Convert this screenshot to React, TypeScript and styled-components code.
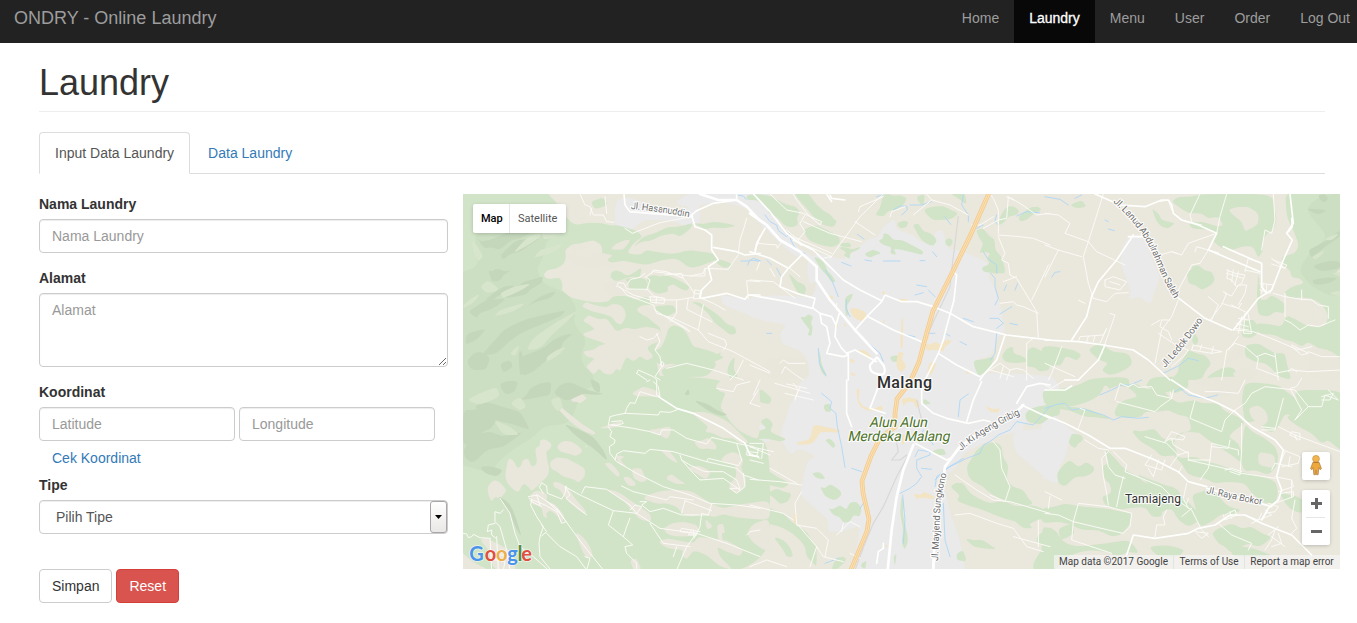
import React from 'react';
import styled, { createGlobalStyle, css } from 'styled-components';

const GlobalStyle = createGlobalStyle`
  *, *::before, *::after { box-sizing: border-box; }
  body {
    margin: 0;
    background: #fff;
    color: #333;
    font: 14px/20px "Liberation Sans", Arial, sans-serif;
  }
  html, body { overflow: hidden; }
`;

const Navbar = styled.nav`
  display: flex;
  justify-content: space-between;
  height: 43px;
  background: #222;
  overflow: hidden;
`;

const Brand = styled.a`
  padding: 8px 14px;
  font-size: 18px;
  color: #9d9d9d;
`;

const NavList = styled.div`
  display: flex;
  margin-right: -8px;
`;

const NavItem = styled.a<{ $active?: boolean }>`
  padding: 8px 15px;
  white-space: nowrap;
  color: ${(p) => (p.$active ? '#fff' : '#9d9d9d')};
  background: ${(p) => (p.$active ? '#080808' : 'transparent')};
  -webkit-text-stroke: ${(p) => (p.$active ? '0.3px #fff' : '0')};
`;

const Page = styled.main`
  padding: 20px 17px 0 39px;
`;

const PageHeader = styled.header`
  margin-right: 15px;
  height: 49px;
  border-bottom: 1px solid #eee;
`;

const Title = styled.h1`
  margin: 0;
  font-size: 36px;
  font-weight: 400;
  line-height: 40px;
`;

const Tabs = styled.div`
  display: flex;
  margin: 20px 15px 20px 0;
  height: 42px;
  border-bottom: 1px solid #ddd;
`;

const Tab = styled.a<{ $active?: boolean }>`
  height: 42px;
  margin-right: 2px;
  padding: 10px 15px;
  border: 1px solid transparent;
  border-radius: 4px 4px 0 0;
  color: #337ab7;
  ${(p) =>
    p.$active &&
    css`
      color: #555;
      background: #fff;
      border-color: #ddd #ddd #fff;
    `}
`;

const Columns = styled.div`
  display: flex;
  gap: 15px;
`;

const Form = styled.form`
  width: 409px;
`;

const Group = styled.div<{ $gap?: number }>`
  margin-bottom: ${(p) => p.$gap ?? 15}px;
`;

const Label = styled.label`
  display: block;
  margin-bottom: 5px;
  font-weight: 700;
`;

const control = css`
  display: block;
  width: 100%;
  height: 34px;
  padding: 6px 12px;
  border: 1px solid #ccc;
  border-radius: 4px;
  background: #fff;
  color: #555;
  font: inherit;
  box-shadow: inset 0 1px 1px rgba(0, 0, 0, 0.075);
  &::placeholder { color: #999; opacity: 1; }
`;

const Input = styled.input`${control}`;

const Textarea = styled.textarea`
  ${control}
  height: 74px;
  resize: vertical;
`;

const Pair = styled.div`
  display: grid;
  grid-template-columns: 196px 196px;
  gap: 4px;
`;

const LinkButton = styled.a`
  display: block;
  padding: 7px 13px;
  color: #337ab7;
`;

const Select = styled.div`
  ${control}
  display: flex;
  justify-content: space-between;
  padding: 0 0 0 16px;
  line-height: 32px;
`;

const SelectArrow = styled.span`
  display: flex;
  align-items: center;
  justify-content: center;
  width: 17px;
  height: 32px;
  border: 1px solid #a9a6a9;
  border-radius: 3px;
  background: linear-gradient(#fff, #f4f3f2 50%, #e9e8e7);
`;

const Buttons = styled.div`
  display: flex;
  gap: 4px;
`;

const Button = styled.button<{ $danger?: boolean }>`
  height: 34px;
  padding: 0 12px;
  border: 1px solid ${(p) => (p.$danger ? '#d43f3a' : '#ccc')};
  border-radius: 4px;
  background: ${(p) => (p.$danger ? '#d9534f' : '#fff')};
  color: ${(p) => (p.$danger ? '#fff' : '#333')};
  font: inherit;
`;

const MapFrame = styled.section`
  position: relative;
  width: 877px;
  height: 375px;
  overflow: hidden;
  font-family: Roboto, sans-serif;
`;

const MapCanvas = styled.svg`
  display: block;
`;

const card = css`
  position: absolute;
  background: #fff;
  border-radius: 2px;
  box-shadow: 0 1px 4px -1px rgba(0, 0, 0, 0.3);
`;

const MapTypes = styled.div`
  ${card}
  top: 10px;
  left: 10px;
  display: grid;
  grid-template-columns: 36px 57px;
  height: 29px;
  font-size: 11px;
  line-height: 29px;
`;

const MapType = styled.span<{ $active?: boolean }>`
  padding-left: 8px;
  color: ${(p) => (p.$active ? '#000' : '#565656')};
  font-weight: ${(p) => (p.$active ? 500 : 400)};
  & + & { border-left: 1px solid #e6e6e6; }
`;

const PegmanButton = styled.div`
  ${card}
  top: 258px;
  right: 10px;
  width: 28px;
  height: 28px;
`;

const ZoomButtons = styled.div`
  ${card}
  top: 296px;
  right: 10px;
  width: 28px;
  height: 55px;
`;

const Attribution = styled.div`
  position: absolute;
  right: 0;
  bottom: 0;
  display: flex;
  height: 14px;
  padding-right: 1px;
  background: rgba(245, 245, 245, 0.7);
  color: #444;
  font-size: 10px;
  line-height: 14px;
  white-space: nowrap;
`;

const Credit = styled.span<{ $width: number }>`
  width: ${(p) => p.$width}px;
  text-align: center;
  & + & { border-left: 1px solid rgba(225, 225, 225, 0.8); }
`;

/* Map geometry: six sheets drawn at three units per pixel. */
type Sheet = {
  x: number;
  y: number;
  green?: string[];
  urban?: string[];
  land?: string[];
  veil?: string[];
  shade?: string[];
  light?: string[];
  amber?: string[];
  water?: string[];
  rail?: string[];
  lane?: string[];
  road?: string[];
  main?: string[];
};

const northWest: Sheet = {
  x: -3, y: -4,
  green: [
    '-40,-30 240,-10 265,12 300,50 320,85 345,105 385,98 430,100 470,112 490,140 462,165 430,205 425,165 400,150 370,158 335,165 315,180 318,200 312,222 290,236 262,240 250,255 262,268 300,262 308,285 305,300 330,322 360,330 410,338 445,335 460,318 500,318 530,330 560,318 582,345 550,345 530,355 538,372 590,375 575,395 600,410 605,440 580,480 610,600 -40,600',
    '430,110 470,105 500,113 530,122 548,140 520,160 500,190 540,195 560,180 600,188 640,192 690,180 760,190 772,208 730,225 690,235 660,212 640,205 600,212 560,225 520,218 490,212 460,218 435,215 425,180',
    '520,170 535,155 550,140 590,128 620,112 660,110 700,98 690,118 660,140 640,130 600,138 575,152 545,155',
    '700,100 730,102 760,95 800,100 830,108 790,115 760,112 735,118 720,110',
    '560,262 580,255 600,260 620,255 660,272 690,290 680,303 660,296 640,282 622,290 625,305 590,312 565,295',
    '620,435 625,415 640,405 665,412 680,430 690,450 700,470 735,478 770,490 775,505 740,520 710,515 680,530 640,520 600,525 580,510 570,490 600,475 610,460',
    '693,335 720,338 745,355 775,375 800,402 825,410 830,430 810,435 790,418 765,400 745,370 720,350',
    '755,195 770,205 820,222 795,236 770,220', '392,35 430,22 445,45 405,58',
    '455,245 475,240 500,258 520,250 545,232 540,262 510,260 470,275 450,262',
    '500,265 540,262 560,270 565,298 535,300 500,295 490,275',
    '585,348 640,345 650,365 620,380 610,375 588,362', '660,455 720,480 800,500 750,520 690,500',
    '705,505 750,500 790,485 760,510 770,525 740,560 680,560 620,570 600,540 640,525', '810,515 825,500 820,540 835,560 815,570 800,545',
  ],
  urban: ['465,35 500,20 560,40 640,70 700,48 720,50 720,98 700,100 680,110 640,92 600,90 550,90 510,125 490,128 465,110', '640,40 690,8 930,-10 930,90 860,55 790,35 720,45 700,55', '780,315 850,325 930,330 930,400 880,380 840,365 790,345'],
  land: [
    '378,335 400,345 440,352 460,340 488,348 500,375 485,405 468,398 455,380 430,372 410,368 390,362 365,350', '368,392 385,375 415,388 440,385 455,405 470,425 500,412 520,418 560,410 600,418 608,440 600,455 575,462 560,475 582,500 560,512 540,498 520,515 500,500 490,520 480,545 470,535 455,555 430,550 418,535 400,555 378,530 390,518 405,505 380,500 368,485 400,480 420,465 440,462 405,450 375,440 368,430 405,418 390,405',
    '538,350 555,345 570,355 585,362 590,375 600,385 620,395 590,405 560,380 545,375', '325,170 345,160 372,164 385,172 360,184 335,182', '318,195 340,192 370,200 385,205 410,185 430,190 460,195 440,210 465,225 490,215 470,235 430,228 400,235 350,230',
    '430,275 460,282 500,265 510,300 480,318 445,315', '450,178 470,160 495,150 512,150 490,180', '480,452 520,455 560,465 530,475 490,470',
  ],
  veil: ['40,130 110,135 200,115 330,112 260,150 250,200 230,240 250,280 320,310 350,350 340,400 380,450 360,500 390,560 400,600 -40,600 -40,260 60,230'],
  shade: [
    '45,130 60,155 90,150 140,128 200,118 250,115 210,130 180,145 150,152 120,180 95,172 70,175', '85,240 95,245 110,235 135,245 155,240 130,255 120,272 95,275', '75,330 100,310 130,290 165,285 150,300 120,315 90,335', '25,365 50,348 80,330 140,325 115,345 90,360 60,368 50,385',
    '190,275 220,268 250,258 245,280 215,295 200,312 170,320 130,325', '110,445 130,420 190,390 250,375 320,360 300,380 240,405 180,430 140,462 110,490 80,495 60,500', '20,515 40,490 60,485 80,495 90,505 80,535 65,540 35,540', '185,500 210,490 250,475 280,450 310,435 340,430 310,455 300,480 260,510 220,545 185,560',
    '170,150 200,148 240,145 210,165 180,185 150,192 130,210 120,195', '20,430 80,415 50,450 15,465', '240,320 270,308 290,305 270,325 230,335 200,350', '175,490 185,480 195,540 180,560', '120,520 150,510 160,530 130,550',
  ],
  light: [
    '180,165 205,140 240,128 245,138 205,165 160,190', '120,310 160,290 215,280 185,300 130,325', '200,480 215,450 240,430 280,402 310,385 355,360 320,395 270,440 250,465 230,478', '10,345 35,325 60,310 45,335 10,355', '35,150 50,165 70,200 55,215 40,185', '240,180 280,170 310,160 285,185 220,205', '120,360 160,348 200,338 160,365 100,380', '150,490 165,475 180,465 165,500', '240,105 320,110 290,140 250,150', '260,500 290,480 320,470 290,500 260,515', '60,290 85,270 120,300 80,310',
  ],
  water: ['830,15 850,18 858,28', '843,213 868,213 880,205 900,212', '868,213 863,225'],
  lane: [
    '360,12 375,45 390,50 400,75 430,75 440,95 462,97', '390,75 395,55', '435,20 440,70', '495,115 517,130 600,98 695,80', '860,85 850,120 840,150 835,190', '890,240 900,215',
    '470,290 475,278 492,280 500,297 562,298 580,318 610,325', '475,290 520,315 570,330 650,330 700,322', '500,285 512,268 540,262 555,250', '560,300 570,270 560,262', '555,262 580,245 640,252 690,258 730,250 735,235 805,238 820,215 835,195', '575,250 580,240 620,245 670,265 665,250 615,255', '735,235 735,258 690,258', '670,265 690,290 703,310',
    '480,290 500,315 580,345 590,370 640,385 715,420 745,455 820,485 930,545', '585,360 640,395 690,425 680,415 620,380', '705,300 722,302 718,325 700,327 705,300', '703,310 720,312', '570,320 615,325 612,340 572,337 570,320', '590,322 588,340',
    '650,330 650,370 630,395', '590,430 600,455 585,480 600,500 605,530 585,560 600,570', '605,515 612,520 608,530 600,525 605,515', '540,440 560,450 580,445 595,430', '530,550 535,540 580,560 590,570', '620,535 680,520 760,540 850,570',
    '685,325 680,358 755,395', '725,325 760,340 795,360', '730,345 725,370 715,420', '850,510 830,550 810,570', '745,430 795,450 800,465 790,480', '865,325 860,272 900,275', '530,550 560,570',
  ],
  road: ['492,12 495,45 510,65 570,70 695,80', '695,75 705,110 735,120 755,135 755,180 775,210 745,230 755,270 725,300 720,325', '760,172 830,185 855,195 900,190', '695,75 710,62 760,40 830,30 830,12', '885,180 900,140', '725,325 800,310 855,328 865,315 900,315'],
  main: ['720,12 775,30 830,30 860,50 900,92'],
};

const southWest: Sheet = {
  x: -3, y: 186,
  green: ['-40,-25 770,-10 800,30 780,80 800,110 860,165 930,190 930,600 -40,600'],
  land: [
    '765,20 780,5 785,-5 900,-10 900,180 860,165 835,150 810,125 795,100 780,80 790,60 830,45 800,40 780,35', '515,40 535,28 550,20 580,28 600,40 595,52 565,48 530,50', '333,50 350,45 355,30 370,45 382,55 360,70 350,65 335,65', '292,85 305,82 320,95 345,115 370,135 408,158 400,165 375,155 350,140 325,120', '415,145 445,135 485,122 480,138 450,145', '565,150 600,145 633,138 630,165 620,178 600,165 585,160',
    '690,95 740,97 780,112 810,130 840,160 868,188 840,190 820,175 790,175 760,160 735,155 745,140 720,120', '290,200 305,185 325,182 345,190 368,210 360,222 345,228 330,222 300,215', '270,245 290,232 320,235 345,248 375,265 375,290 355,308 345,300 310,290 290,275 272,265',
    '145,235 160,240 172,265 182,260 190,238 205,235 215,262 232,250 225,205 240,198 240,180 255,178 275,190 272,205 258,215 262,240 268,270 262,290 240,310 215,335 205,320 190,310 175,338 155,325 140,305 135,285', '82,320 100,300 118,305 140,330 130,345 120,355 105,350 95,365 85,345', '280,305 300,308 325,325 345,355 380,395 375,402 355,390 320,360 300,330 280,320', '210,345 230,330 262,342 260,365 285,372 315,410 305,430 295,410 270,390 258,400 262,415 250,410 245,380 215,372',
    '432,250 450,248 465,262 480,282 475,292 455,275', '515,265 545,265 552,285 562,300 545,308 520,295', '488,292 505,290 525,305 528,318 505,318', '620,290 635,282 655,298 678,312 650,312 622,300', '700,185 725,182 745,172 770,195 768,210 745,205 720,208', '680,262 720,257 745,270 752,280 738,298 715,285', '780,240 800,222 820,215 840,225 850,240 845,262 810,252',
    '600,210 625,210 650,240 652,250 630,238', '545,355 590,335 650,328 700,335 750,370 790,385 830,375 930,360 930,420 860,415 830,412 790,402 760,412 730,400 700,410 670,405 650,380 620,370 590,372', '440,330 460,330 490,345 530,375 570,400 575,425 540,420 510,385 490,360', '610,445 635,430 670,425 710,435 718,450 700,468 650,470 620,462', '595,485 620,475 650,480 700,490 715,470 745,475 800,480 850,510 840,530 800,515 770,500 780,530 820,570 780,560 740,525 700,510 680,540 665,525 670,510 620,505',
    '860,460 880,430 930,415 930,520 880,490', '770,435 790,430 795,460 785,458 790,495 775,480', '830,380 850,370 870,385 840,400', '345,455 370,470 390,500 400,530 380,535 365,510', '465,225 495,230 480,240 500,260 480,255', '60,480 75,472 110,490 150,510 160,545 170,570 100,570 90,515', '825,250 840,240 845,270 860,300 850,330 825,340 805,315 830,290', '510,540 530,535 545,570 520,570', '735,415 760,440 740,450',
  ],
  urban: ['862,160 890,130 930,140 930,190 880,175'],
  veil: ['-40,-40 380,-40 400,-15 400,10 360,50 330,130 250,140 210,180 170,200 120,240 90,280 -40,240'],
  shade: [
    '9,90 40,90 60,85 90,98 110,115 95,145 70,155 40,180 9,200', '120,10 150,2 175,5 165,35 140,45 125,30', '180,60 200,45 210,25 240,10 275,5 270,45 245,50 220,55', '40,80 80,65 120,78 180,95 195,120 210,150 180,140 150,130 110,122 90,110', '10,210 30,180 60,160 90,155 130,170 190,155 160,180 130,200 80,210 40,250 15,235', '60,260 90,258 130,270 110,290 75,280', '280,40 300,15 330,5 380,30 435,42 400,45 370,40 320,65', '310,130 360,150 400,170 430,210 445,245 400,205 350,170', '110,345 150,370 170,420 185,470 170,450 150,400', '700,60 740,70 770,90 805,105 780,108 740,90', '672,45 685,25 690,45', '390,-5 420,10 420,40 400,30',
  ],
  light: ['150,70 180,50 200,80 180,92', '20,60 60,40 110,20 120,50 60,75', '270,60 300,50 310,85 290,95', '100,120 150,140 180,165 130,165'],
  lane: [
    '590,0 590,45 600,50 595,20 580,5', '590,50 540,35 525,70 510,68 500,85 495,100 470,105 450,110 445,135 475,135 490,130 485,122 455,125', '495,100 540,102 595,105 600,95 630,97 650,90', '445,140 455,155 450,170 465,180 463,190 448,200 450,220 470,245 530,280 610,320 690,345 750,370 830,375 900,385', '455,135 520,145 570,155 600,165 605,150 640,150 680,175 740,192 755,172 830,190 880,200', '465,240 470,222 490,212 555,220 570,208 640,215 740,245 830,265 850,285 895,300',
    '740,245 745,235 835,257 845,240 830,190', '660,225 665,240 690,255 735,275 790,275 830,300 840,325 810,325', '665,240 700,280 720,300 790,295 840,330', '850,280 855,320 830,340 810,325', '570,0 560,5', '770,25 820,35 830,15 870,5', '895,30 870,70 900,80',
    '485,318 520,335 560,345 620,360 630,350 700,360', '365,340 375,320 440,328 510,375 530,400', '315,320 360,345 460,392 530,400 600,445 710,460 800,490 900,530', '530,400 545,380 525,375 510,390', '540,365 560,365 545,375 570,395 610,385 665,405 745,405 755,372', '675,362 665,400', '675,362 755,392', '460,392 445,435 490,470 518,495 495,500 500,520 530,550 530,570', '490,470 500,440 510,415',
    '318,318 315,340 305,357 262,340 260,318 245,308 238,322 250,340', '315,320 330,345 318,355 380,405', '205,350 232,345 285,380 300,400 262,365', '207,355 255,375 290,395 305,430 318,425 290,385', '290,385 340,455 370,495 430,570', '215,360 212,375 230,410 250,440 240,470 237,490 240,530 270,567', '245,435 260,455 245,468', '260,460 300,500 350,530 380,570', '230,345 240,375', '210,362 245,380',
    '120,355 150,400 165,460 180,500 220,530 265,570', '130,390 120,400 105,395 105,425 120,440 140,510 150,570', '105,430 85,435 82,455 95,450 95,465 108,475', '9,460 20,462 25,473 35,470 40,463 60,473 90,475', '90,475 95,570', '90,525 135,525', '95,540 130,540', '110,470 115,570',
    '710,460 660,455 665,445 720,455', '705,470 720,440 725,400 745,405', '710,460 680,500 650,570', '710,465 685,465 695,450', '570,430 610,490 650,495 690,500', '860,465 870,455 900,450', '870,200 895,205 890,230 860,225 862,205', '865,215 895,218', '378,200 378,200', '375,530 390,535 380,570', '100,535 135,545 130,570 100,570', '700,450 702,475', '650,500 640,530',
  ],
  road: ['595,50 650,85 700,100 790,145 855,190', '855,190 870,225 895,230'],
};

const north: Sheet = {
  x: 287, y: -4,
  green: [
    '-10,15 30,12 60,18 85,30 110,45 135,48 150,65 140,85 145,105 125,112 105,108 80,80 55,70 50,50 20,30 -10,30', '130,10 160,12 175,10 200,45 225,65 242,75 258,95 250,112 220,105 195,85 170,55', '160,122 175,112 200,105 235,122 268,140 270,158 250,172 210,165 175,150', '400,12 440,14 470,22 465,40 440,60 415,62 400,80 375,75 390,55', '500,20 525,12 520,50 505,35', '520,60 545,50 580,48 600,58 625,70 605,88 570,90 545,90', '440,100 460,92 475,95 470,112 450,115',
    '488,105 505,100 520,125 540,128 562,150 550,168 530,162 510,145 500,125', '385,152 400,145 400,130 415,132 430,150 455,150 480,162 522,185 515,195 480,185 430,175 440,195 420,190 425,172 400,165', '585,150 600,143 610,155 600,170 588,165', '265,172 290,172 305,178 335,170 320,182 300,188 300,208 280,195 290,188', '345,190 370,178 395,190 375,195 362,203 348,198', '190,200 208,205 225,222 232,242 245,255 258,275 245,278 230,255 215,240',
    '678,120 700,115 715,135 735,150 735,180 755,200 768,250 735,250 700,245 695,232 720,222 710,205 722,190 700,185 688,190 700,160 688,145', '770,50 790,48 808,62 800,75 775,80 760,100 745,105 750,80', '805,80 840,52 865,50 875,60 850,72 830,90 810,95', '115,250 130,262 142,275 165,285 170,305 160,318 145,310 130,285', '285,325 295,315 310,310 300,335 290,345 297,375 287,378 285,350', '150,380 165,382 175,372 190,380 182,400 188,410 185,438 172,435 180,420 165,402',
    '420,500 445,495 445,515 425,515', '670,512 700,508 735,498 722,530 700,550 685,558 675,535', '755,500 770,475 790,470 790,490 820,500 835,515 795,520 765,515', '205,475 212,500 215,525 232,558 220,555 208,530', '100,520 120,522 150,530 175,545 165,550 135,535', '600,10 645,10 650,45 625,25', '265,160 300,158 305,172 275,170', '832,480 850,470 870,482 900,490 900,540 870,545 850,530 828,530', '240,85 262,92 250,112',
  ],
  urban: [
    '-10,10 30,10 110,130 170,205 130,195 80,150 0,70', '170,240 175,210 200,190 245,200 280,210 330,170 350,150 385,140 400,110 432,85 440,120 480,130 520,160 550,160 555,125 580,120 590,175 640,185 720,220 715,260 728,280 745,330 755,360 760,400 765,430 742,440 735,470 720,500 670,510 700,560 720,600 180,600 175,510 150,480 95,462 90,430 110,405 60,395 -10,378 -10,325 60,315 150,320 190,325', '120,185 150,175 190,200 190,215 150,190',
  ],
  land: ['180,280 200,275 190,320 160,315', '30,520 90,500 165,500 180,560 100,570 40,560', '390,-5 500,-5 470,10 430,20'],
  amber: [
    '300,355 320,355 345,365 350,380 335,395 305,380', '455,385 460,385 458,475 450,475', '445,485 462,488 455,505 470,530 455,548 440,535 440,510', '525,460 540,465 555,455 572,465 585,450 605,450 600,460 585,470 580,485 560,480 545,480 530,482', '540,515 560,520 545,555 530,550', '325,480 345,480 365,500 355,507 330,490', '255,400 265,405 260,420', '280,398 290,405 285,412', '236,315 252,320 245,330', '450,325 475,328 465,340 450,335', '395,303 410,308 400,315', '300,505 315,512 310,520 300,515', '300,545 320,555 305,558', '645,540 662,550 650,553', '398,390 405,390 400,405', '525,430 540,440 528,455',
  ],
  water: [
    '45,75 60,95 80,105 85,122 110,140 120,130', '120,145 130,165 145,185 165,190', '225,240 245,270 255,295 265,320', '290,330 288,355 300,380', '320,430 350,455 390,490 400,515', '322,133 342,147', '380,20 400,15', '430,60 450,48 470,48 472,60 455,75', '480,45 515,45 545,35', '640,15 635,45 655,75 655,95', '585,80 592,90 602,103', '740,75 735,95 745,105', '700,185 712,205 740,225 740,250', '700,105 680,115', '800,78 830,65 868,68', '722,250 735,265 735,290 745,325 735,345', '762,302 770,285', '795,300 803,280', '720,385 745,385 760,400 740,415', '780,400 803,405', '750,372 785,350', '740,430 735,490 722,510', '345,210 365,213', '400,213 450,213', '510,212 525,212', '500,285 530,290', '495,315 520,308', '548,185 560,200', '205,475 208,520 228,558', '585,430 600,438', '470,435 495,440', '528,430 555,430', '0,210 32,214', '50,210 65,225', '80,235 95,262', '50,430 65,430', '630,455 650,465', '275,217 303,228', '535,300 555,320', '640,385 670,395',
  ],
  rail: ['625,80 605,240 600,290 550,395 530,440'],
  lane: [
    '60,12 110,60 160,70 215,95 210,105 175,75 140,30 130,12', '165,75 150,100 165,125 145,150', '160,95 240,130 335,155', '240,205 330,80 400,12', '315,95 375,135', '130,140 245,190', '110,120 155,160 245,200', '20,160 80,165 82,175 95,155', '325,65 330,50 400,20', '420,80 425,65 465,50', '490,75 520,50 545,30 530,12', '545,30 600,45 655,75', '700,115 745,90 745,60 730,25 720,12', '665,105 690,105 730,80', '745,140 765,190 755,210 775,220 780,255 800,265 860,365 865,445', '800,260 760,275', '745,135 810,140 850,145 900,165', '745,130 745,90 770,85 775,20 810,40 860,75 900,70', '895,225 860,300 845,330', '750,340 790,335 800,345 820,350 865,370', '0,270 70,275 135,325', '120,235 150,260', '90,520 100,510 115,520 165,520', '95,550 105,530 130,550 160,570', '0,525 60,550', '690,560 750,520 780,540 800,535 820,540 850,565', '830,570 830,460 850,445', '760,530 750,565', '780,540 770,570', '720,540 790,560', '260,340 260,360', '240,200 220,205', '770,20 790,30', '60,235 75,260',
  ],
  road: [
    '15,190 20,160 45,115', '0,185 60,205 115,235 155,195', '115,235 95,260 90,290 140,310 195,325 188,355 110,335 0,315', '190,355 210,370 245,380 258,405 255,440 275,475 295,495 280,500 230,490 240,460 230,410 215,400 210,370', '268,370 258,405', '295,490 295,570', '290,490 315,480 380,515', '315,420 355,375 395,335 405,315 455,335 500,335 550,350 600,370 670,410 770,435 900,450', '355,380 430,420 515,455', '395,332 330,300 280,270 230,220 190,180 130,150', '610,245 620,255 612,330 590,410 580,450 565,490 525,570', '565,490 620,525 690,560', '765,435 740,510 700,555 690,570', '240,15 245,25 285,30', '230,12 245,35', '10,12 60,65 110,130 155,165',
  ],
  main: ['0,70 50,105 90,150 150,185 200,230 200,270 240,330 315,420 380,490'],
};

const south: Sheet = {
  x: 287, y: 186,
  green: [
    '-10,45 20,35 35,28 50,40 65,55 60,72 40,70 20,60 -10,62', '30,125 50,112 70,130 60,155 80,165 110,178 90,185 50,175 -10,180 -10,160 30,152 50,145', '220,75 240,70 245,95 225,95', '185,280 210,275 228,298 200,295', '210,320 225,325 240,312 270,330 275,345 255,362 225,350', '235,385 250,388 270,375 290,390 298,368 320,365 335,385 330,410 310,405 300,425 280,428 270,412 250,405', '520,55 545,70 520,75', '545,215 560,208 580,205 590,225 560,225',
    '650,260 665,235 680,210 700,195 735,185 755,198 758,230 775,255 770,300 788,320 820,330 835,355 850,370 830,378 790,372 750,355 720,340 700,320 670,305 655,290', '600,320 620,308 640,310 660,340 690,358 720,370 760,362 800,380 850,375 900,395 900,430 880,415 850,425 830,440 800,425 750,412 700,390 650,375 620,362 630,345', '645,475 670,480 700,480 720,495 740,508 700,505 670,500', '825,100 845,85 870,78 930,70 930,105 900,112 870,135 830,125', '860,470 880,455 900,440 930,465 900,500 860,490', '850,550 870,515 900,490 930,500 930,570 850,570', '455,345 462,370 458,400 465,430 475,480 465,510 455,490 460,450 450,400', '-10,275 20,270 60,275 85,292 120,310 100,325 70,318 40,310 -10,300', '50,340 80,325 100,335 125,340 115,365 90,372 70,352', '-10,350 20,358 60,385 100,400 130,430 170,455 185,480 200,500 200,560 185,545 170,530 165,500 150,480 120,455 90,440 50,430 20,405 -10,385',
    '225,180 240,175 258,195 250,205 235,190', '620,520 640,510 650,545 620,540', '250,550 265,532 280,530 290,540 260,570 245,570', '70,470 100,480 120,500 130,530 110,530 100,510', '790,420 820,415 850,445 820,445', '430,530 440,520 435,560', '330,555 350,540 345,570',
  ],
  urban: [
    '110,110 120,70 150,45 145,10 190,-20 900,-20 930,20 930,80 880,105 820,130 820,155 780,160 740,170 690,195 640,220 620,260 590,285 580,300 590,350 600,400 615,440 630,480 650,600 300,600 315,520 325,480 330,440 300,445 280,455 250,455 235,455 235,420 190,380 150,345 160,290 175,240 200,230 150,205 120,225 100,190 90,160', '790,155 880,145 930,160 930,310 900,305 860,270 830,245 800,220 790,190',
  ],
  amber: ['318,28 330,25 325,60 340,80 370,88 395,75 400,92 350,92 325,75', '190,132 230,142 270,150 268,158 210,155 200,175 185,192 140,195 145,185 180,180', '460,80 455,55 480,52 505,60 510,80 498,85 490,65 470,65', '490,340 515,345 520,335 555,350 550,358 515,352 500,358', '702,75 725,88 750,85 745,98 720,95', '405,495 418,498 408,503', '455,160 465,165 465,190 455,195', '130,400 142,405 140,435 132,430'],
  water: ['215,40 245,65 240,85 258,100 262,140 275,200 285,262', '305,265 335,275', '555,320 560,290 600,260 650,235 690,220 700,195 720,185 745,165 780,150 800,125 850,135 900,80', '555,300 590,265 640,235', '495,230 505,210 540,215 540,225 500,240 500,265 515,290 500,310 480,325 450,340', '458,345 465,420 460,490', '580,370 585,480 600,530', '540,180 550,195', '510,175 520,150', '625,110 630,60 655,42', '515,265 545,268', '330,385 340,370', '225,550 265,535'],
  rail: ['500,60 515,120', '440,190 445,215 425,240 450,240 470,225', '475,225 440,290 400,380 370,430 345,490 315,570'],
  lane: ['10,45 30,0', '75,10 180,40', '105,40 190,60', '130,10 145,30 135,55', '150,20 135,60', '110,12 170,25', '0,200 60,225', '0,190 40,190 35,235', '25,205 70,215', '0,240 40,250', '0,220 30,235', '60,265 140,310', '0,298 90,305 155,315', '155,335 135,370 140,430 200,500 220,530 280,545', '0,375 100,400 130,420', '140,435 200,445 235,480 225,530', '260,465 300,425 330,440', '730,185 750,210 755,265 780,320 765,365 720,345', '615,285 680,330 730,360 780,365 900,400', '615,405 660,400 740,430 790,445 830,500 880,515', '865,420 865,500', '790,470 900,500', '280,430 275,455', '300,520 330,535', '0,560 50,540 110,560', '200,500 180,560'],
  road: ['290,0 290,50 290,100 305,140', '385,20 360,85 405,100', '515,10 515,70 550,100 590,115 655,130 700,120 720,125', '695,5 670,60 650,125', '495,190 590,240 600,235', '800,70 830,20 870,10 900,15', '815,75 900,115', '550,570 550,540', '380,550 385,515 400,505 400,490'],
  main: ['490,195 460,270 440,350 425,450 413,570', '580,300 585,260 630,200 700,150 760,120 800,95 820,75', '575,300 565,370 555,450 550,570'],
};

const northEast: Sheet = {
  x: 582, y: -4,
  green: [
    '-10,470 20,468 60,475 90,482 110,495 95,512 75,502 60,500 50,525 10,530 -10,520', '130,480 150,465 175,465 200,485 250,490 262,515 255,530 220,550 190,555 170,540 190,520 160,508', '320,55 340,70 350,90 370,95 390,100 370,115 350,110 335,95', '380,35 400,20 440,20 470,12 680,12 690,60 695,90 685,120 665,130 650,160 655,180 640,205 625,170 600,168 560,180 530,175 500,150 515,140 500,120 470,118 440,115 430,100 470,95 520,110 535,105 520,80 490,85 470,70 430,70 400,50', '720,0 930,0 930,600 880,560 900,510 860,500 820,475 790,455 770,470 745,455 720,450 690,435 640,430 630,400 670,402 710,410 725,375 755,390 790,410 840,410 850,380 835,345 800,325 770,322 740,325 715,310 740,290 778,280 765,265 740,262 735,240 712,225 710,200 750,190 762,165 745,120 725,80',
    '425,245 440,240 440,230 460,225 480,242 500,245 510,268 500,285 470,300 450,285 430,280', '640,250 645,280 645,330 665,330 680,315 720,340 718,370 690,365 670,380 640,375 635,330', '400,530 415,505 430,480 455,490 480,495 500,520 480,545 470,570 380,570 400,545', '600,465 640,460 665,475 690,490 720,490 725,520 740,570 700,560 680,535 660,520 630,515 600,500', '590,400 605,390 630,390 640,430 615,445 590,440', '75,45 110,30 125,50 95,55', '440,450 450,430 462,450 450,470', '500,550 530,535 560,530 600,570 480,570',
  ],
  land: ['550,60 570,52 610,50 640,70 640,100 625,112 600,125 590,95 570,80', '545,500 570,480 590,465 600,490 570,510 540,520', '560,550 600,530 640,550 620,570 580,570', '870,250 885,235 885,262', '800,470 850,480 885,500 885,570 800,570 790,520'],
  urban: ['250,140 275,132 300,140 308,160 315,195 325,215 345,260 335,290 325,310 320,340 300,335 285,320 250,328 258,305 245,270 225,220 235,165'],
  veil: ['780,60 820,20 930,0 930,310 860,320 800,290 760,240 800,180 850,140'],
  shade: ['790,180 820,165 850,150 885,120 885,140 840,170 800,205', '820,15 840,12 850,25 840,38 825,30', '800,228 850,212 885,215 885,235 830,245', '780,55 850,60 820,75', '800,270 850,262 880,265 850,280 810,285'],
  light: ['800,200 840,180 830,195 810,210', '850,310 885,300 885,320', '860,250 885,245 885,260', '835,148 885,128 860,152'],
  water: ['0,20 45,28 70,45', '180,90 190,95', '190,117 208,122', '20,262 30,247 45,245', '355,550 375,540 400,528 430,505 460,512', '90,25 110,15'],
  lane: [
    '175,12 160,60 130,155 115,200 130,280 145,325', '130,155 60,130 75,100 40,75 0,70', '0,165 40,180 110,200', '130,155 155,185 240,225', '0,260 40,180', '145,325 185,335 210,310 250,308', '180,270 205,260 245,275 225,300 180,290 180,270', '195,275 225,285', '440,95 435,75 465,12', '515,130 525,80 545,12', '410,90 470,105', '380,185 410,195 430,160 515,130', '345,195 380,185 395,190', '400,300 440,225 465,220 490,180', '490,180 455,170 450,185', '400,330 380,380 350,420 330,520', '375,390 350,390 345,410 370,425 380,450', '345,390 320,405', '490,320 520,345 500,390', '495,390 530,345 545,310 535,305', '530,340 580,355 590,340', '540,310 560,318 580,285 605,285 600,310 580,345', '560,345 610,370', '545,240 570,250 600,255 590,280 575,290 560,270 545,265 550,240', '545,250 595,265', '565,240 560,275', '580,245 570,285', '645,280 685,285 675,310 645,300', '655,280 650,310', '665,285 665,310', '680,205 720,235 725,225 685,210', '680,222 720,235', '600,245 610,205 620,210', '720,310 720,380', '720,390 740,400 765,420 790,405 820,410 870,390', '685,310 720,320 770,328 800,330 820,345 850,350 850,385', '770,300 770,330', '570,420 625,425 690,450 760,480 800,470', '600,370 595,430 620,430 610,375', '580,385 610,390', '575,400 610,410', '570,415 610,420', '590,380 580,430', '640,505 600,470 570,460 545,480 530,570', '640,505 635,535 700,560', '635,500 660,490 690,500', '690,490 700,570', '690,550 740,540 790,545 885,540', '740,465 790,490 770,495 740,470', '790,485 830,500 885,500', '580,440 550,480', '530,485 445,465', '445,465 440,480 500,490 530,485', '470,465 465,480', '505,470 500,490', '340,430 400,470 430,480 420,495 380,530', '50,470 20,550 10,570', '0,520 90,560', '195,370 210,375 170,490', '100,455 105,440 175,435 185,415 165,460', '130,440 125,455', '150,438 145,455', '650,180 660,120 680,130 690,90 685,12', '730,545 740,535 755,545', '380,60 370,30 345,35', '100,330 120,340', '600,240 645,250',
  ],
  road: ['150,12 225,45 300,50 350,30 370,30 380,45 385,70 410,90 460,105 515,130 490,180 645,245', '490,180 520,190', '535,170 625,210 650,220 650,290 665,310', '250,140 300,140', '265,135 215,210 160,275 140,320 125,380 80,450', '0,450 100,455 175,465 265,480 310,510 375,570', '180,465 160,510 100,570', '395,320 480,385 560,420', '735,12 745,100 725,130 742,150 715,210 680,300 640,325 605,370 565,420', '730,125 742,110 740,85'],
};

const southEast: Sheet = {
  x: 582, y: 186,
  green: [
    '-10,30 60,25 100,15 140,-5 250,-10 255,20 200,35 180,12 165,45 130,65 80,80 0,80', '200,105 250,115 290,110 300,95 340,95 370,90 400,105 430,110 440,150 410,160 385,185 350,175 330,145 290,155 260,150 280,180 330,210 350,230 400,225 385,190 400,160 430,155 470,160 530,162 550,120 540,110 520,90 480,75 440,60 400,70 370,50 350,20 310,30 260,5', '-10,80 90,80 140,90 160,100 200,118 150,112 120,110 70,90', '340,60 360,80 350,100', '440,55 470,70 520,70 540,95 580,110 600,130 570,150 550,170 580,190 590,220 590,250 560,225 520,200 490,180 440,140', '600,5 700,15 725,35 745,50 785,80 750,110 720,100 700,140 680,160 650,140 640,120 600,130 590,60', '740,30 885,30 930,90 930,240 885,210 850,180 830,190 800,160 760,140 720,110 780,90', '600,130 620,155 660,175 690,200 700,225 695,260 670,285 630,270 600,275 585,240 590,200',
    '380,220 410,235 450,230 480,245 510,250 545,262 590,275 690,300 700,340 690,370 660,370 620,340 600,310 550,305 510,310 480,295 430,285 410,250',
    '180,205 210,235 240,270 280,290 300,310 390,320 400,345 430,365 460,400 460,425 430,440 400,420 380,385 350,395 350,410 320,410 300,380 250,385 220,390 180,375 170,350 200,340 195,310 180,300 170,260 190,250', '70,190 80,160 110,165 115,180 100,190 90,205', '35,280 55,255 75,240 100,262 125,245 150,265 140,280 120,290 90,290 60,320 40,310', '270,280 320,300 360,315 400,330 410,350 370,340 330,325', '440,345 470,335 500,325 520,350 550,380 590,390 560,405 530,402 500,425 470,440 450,420 455,395', '500,460 520,445 560,430 590,445 620,440 650,460 680,470 660,490 640,500 610,490 590,500 560,520 540,500 520,490', '-10,385 30,380 60,370 110,380 180,385 230,395 260,400 255,430 250,440 225,465 200,470 160,450 110,450 80,435 40,425 -10,430', '40,445 80,430 90,460 60,475 45,480', '-10,440 20,445 60,490 100,500 180,490 250,480 270,500 280,520 250,515 220,530 180,515 130,510 90,520 50,540 20,570 -10,570', '310,500 370,495 420,510 400,530 340,530', '560,500 600,500 640,510 690,530 560,530', '700,330 730,345 760,350 790,375 770,400 740,390 720,370', '300,20 320,-10 430,-10 430,25 390,40 330,30',
  ],
  land: ['345,255 370,245 400,255 430,280 400,285 410,300 380,300', '610,85 640,75 665,95 670,125 650,140 620,115', '185,30 220,15 255,25 280,50 240,60 210,75 180,60', '440,0 520,-10 600,-10 590,40 520,50', '640,215 690,225 690,265 640,255'],
  urban: ['-10,75 20,90 40,120 80,150 100,165 70,190 60,240 30,270 -10,310'],
  water: ['0,85 40,72 60,70 80,90 110,85 140,95 175,105 205,120 230,110 280,115 310,112', '165,45 200,30 230,15 255,15 290,0', '390,35 405,25 430,45 455,50 480,55 518,45'],
  lane: [
    '60,0 20,25 0,15', '100,145 120,90 105,85', '210,60 225,10 250,20 265,12 280,22 320,20 335,45 380,55 385,30', '215,65 330,95 345,80 380,55 375,35', '450,60 435,115 530,155 540,120 570,90', '480,35 520,35 580,40 600,0', '360,185 380,155 420,170 415,180 375,175 362,185', '300,170 365,190 400,225 430,215 430,240', '380,175 385,195 430,220', '430,240 495,240 490,265 465,300', '400,225 375,260', '495,240 500,190 560,205 580,210 580,225', '500,200 550,205 555,180', '590,130 590,210 585,285 555,275', '430,240 560,270 590,280 690,295', '540,270 560,265 590,275', '570,90 600,70 620,40 660,20 750,30 790,80 830,80 840,45 880,60 850,30', '830,50 865,40 855,60 830,60', '715,55 690,150 650,150', '700,140 750,165 885,215', '650,140 690,145', '735,165 765,180 765,160 740,155 735,165', '750,165 755,180', '750,120 770,90 735,25 755,20 770,-5', '790,80 750,120', '715,210 765,230 760,250 710,260', '680,270 690,250 740,260', '735,230 730,260', '720,215 700,265', '690,290 740,300 745,320 700,335', '710,340 745,335 745,350 690,370', '740,300 740,350', '670,370 700,380 690,395 660,400', '120,180 160,205 190,210', '190,215 170,235 175,290 185,340 190,375', '205,215 245,255 240,275 350,320 380,350 440,390 465,440', '235,290 225,330 215,380', '180,215 190,260 210,285 240,295', '320,225 300,255 350,270 360,240', '340,240 325,290 310,265', '400,280 410,260', '425,310 415,355 430,385', '0,400 40,405 85,425 100,370 190,380 260,400 255,440 235,460 190,450 85,425', '85,425 80,480 110,490 200,520', '330,470 335,435 360,435 355,410 365,390', '0,335 50,360', '15,350 10,385', '415,360 425,370 430,355', '450,455 490,460 470,475 455,460', '470,450 490,470', '540,405 570,390 575,405 540,420 535,405', '555,395 560,415', '520,430 560,465 620,490 610,510', '660,390 680,405 640,420', '640,420 650,400', '670,465 700,440', '690,450 680,480 660,510', '700,460 710,490 680,500', '680,470 720,500', '740,415 755,445 740,460', '750,360 740,415', '600,405 640,420 620,430', '440,385 410,410',
  ],
  road: ['0,105 60,130 130,165 195,205 240,205 330,240 400,275 430,305 485,320', '380,0 440,40 510,65 570,95 620,140 690,180 715,210 695,290 710,330 700,360 670,385 650,420', '485,325 610,360 680,380', '240,540 265,465 330,475 430,460 460,445 510,435 555,405 600,405 650,430 740,465 800,525', '60,0 100,0', '80,18 60,30 0,30'],
};

const sheets = [northWest, southWest, north, south, northEast, southEast];

const parse = (s: string) => s.split(' ').map((p) => p.split(',').map(Number));

/* Closed outline whose corners are eased by short curves. */
const outline = (s: string) => {
  const pts = parse(s);
  const blend = (a: number[], b: number[], t: number) => [a[0] * (1 - t) + b[0] * t, a[1] * (1 - t) + b[1] * t];
  const d = pts.map((p, i) => {
    const prev = pts[(i + pts.length - 1) % pts.length];
    const next = pts[(i + 1) % pts.length];
    return `${i ? 'L' : 'M'}${blend(prev, p, 0.66)}Q${p} ${blend(p, next, 0.34)}`;
  });
  return `${d.join('')}Z`;
};

type LayerName = Exclude<keyof Sheet, 'x' | 'y'>;

const Area = ({ name, fill }: { name: LayerName; fill: string }) => (
  <g fill={fill}>
    {sheets.map((sheet, i) => (
      <g key={i} transform={`translate(${sheet.x} ${sheet.y}) scale(0.33333)`}>
        {(sheet[name] ?? []).map((s, k) => <path key={k} d={outline(s)} />)}
      </g>
    ))}
  </g>
);

const Line = ({ name, stroke, width }: { name: LayerName; stroke: string; width: number }) => (
  <g fill="none" stroke={stroke} strokeWidth={width} strokeLinejoin="round" strokeLinecap="round">
    {sheets.map((sheet, i) => (
      <g key={i} transform={`translate(${sheet.x} ${sheet.y}) scale(0.33333)`}>
        {(sheet[name] ?? []).map((s, k) => <polyline key={k} points={s} />)}
      </g>
    ))}
  </g>
);

const highway = 'M526 -1L508 40L490 77L470 117L464 138L456 168L447 188L434 205L432 220L432 233L417 244L408 262L399 287L400 299L406 325L404 337L388 376';

const MapLabel = styled.text<{ $color?: string; $size?: number; $weight?: number }>`
  font-family: Roboto, sans-serif;
  font-size: ${(p) => p.$size ?? 9.5}px;
  font-weight: ${(p) => p.$weight ?? 400};
  fill: ${(p) => p.$color ?? '#6e6e6e'};
  stroke: #fff;
  stroke-width: 2.4px;
  stroke-linejoin: round;
  stroke-opacity: 0.85;
  paint-order: stroke;
`;

const LogoText = styled.text`
  font-family: Lato, sans-serif;
  font-size: 20px;
  font-weight: 700;
  stroke: #fff;
  stroke-width: 1.6px;
  stroke-opacity: 0.6;
  paint-order: stroke;
`;

const curves = [
  { id: 'hasanuddin', d: 'M168 15Q195 17 230 24', text: 'Jl. Hasanuddin', length: 59 },
  { id: 'lanud', d: 'M650 8C672 28 684 45 692 65S704 92 712 106', text: 'Jl. Lanud Abdulrahman Saleh', length: 116 },
  { id: 'ledok', d: 'M702 174Q721 154 740 126', text: 'Jl. Ledok Dowo', length: 61 },
  { id: 'ageng', d: 'M498 257Q520 238 560 219', text: 'Jl. Ki Ageng Gribig', length: 70 },
  { id: 'mayjend', d: 'M475 367L477 320Q478 300 484 279', text: 'Jl. Mayjend Sungkono', length: 88 },
  { id: 'bokor', d: 'M743 299L775 306Q790 310 802 311', text: 'Jl. Raya Bokor', length: 57 },
];

const logo: [string, string, number][] = [
  ['G', '#4a93ea', 6.3], ['o', '#df4f40', 21.8], ['o', '#ecaf4c', 33], ['g', '#4a93ea', 44.3], ['l', '#5b8a45', 54.6], ['e', '#df4f40', 58.2],
];

const CityMap = () => (
  <MapCanvas width="877" height="375" viewBox="0 0 877 375">
    <rect width="877" height="375" fill="#eae7dd" />
    <Area name="urban" fill="#eaeaea" />
    <Area name="green" fill="#d1e4c7" />
    <Area name="veil" fill="#ccdfc2" />
    <Area name="land" fill="#e9e6dc" />
    <Area name="shade" fill="#c4d7bb" />
    <Area name="light" fill="#d8e5cd" />
    <Area name="amber" fill="#f3e4c4" />
    <Line name="water" stroke="#acd6f7" width={2.6} />
    <Line name="rail" stroke="#d8d8d8" width={3.5} />
    <Line name="lane" stroke="#fbfaf6" width={3} />
    <Line name="road" stroke="#fffffd" width={5} />
    <Line name="main" stroke="#fff" width={8} />
    <path d="M414 163L421 172Q424 183 415 180Q406 179 407 171L414 163" fill="none" stroke="#fff" strokeWidth="2.2" />
    <path d={highway} fill="none" stroke="#f4cb8e" strokeWidth="4.6" strokeLinejoin="round" />
    <path d={highway} fill="none" stroke="#fbe1b4" strokeWidth="2.8" strokeLinejoin="round" />
    <path d={highway} fill="none" stroke="#f2c584" strokeWidth="0.7" strokeLinejoin="round" />
    {curves.map((c) => (
      <g key={c.id}>
        <path id={c.id} d={c.d} fill="none" />
        <MapLabel>
          <textPath href={`#${c.id}`} textLength={c.length}>{c.text}</textPath>
        </MapLabel>
      </g>
    ))}
    <MapLabel x="414" y="194" $size={16} $weight={500} $color="#2f2f2f" textLength="55">Malang</MapLabel>
    <g transform="translate(406 233) skewX(-12)">
      <MapLabel $size={14} $color="#4f742c" textLength="58">Alun Alun</MapLabel>
    </g>
    <g transform="translate(384.5 247) skewX(-12)">
      <MapLabel $size={14} $color="#4f742c" textLength="102">Merdeka Malang</MapLabel>
    </g>
    <MapLabel x="662" y="309" $size={12} $color="#333" textLength="56">Tamiajeng</MapLabel>
    <LogoText y="367">
      {logo.map(([letter, color, x], i) => <tspan key={i} x={x} fill={color}>{letter}</tspan>)}
    </LogoText>
  </MapCanvas>
);

export default function App() {
  return (
    <>
      <GlobalStyle />
      <Navbar>
        <Brand>ONDRY - Online Laundry</Brand>
        <NavList>
          {['Home', 'Laundry', 'Menu', 'User', 'Order', 'Log Out'].map((name) => (
            <NavItem key={name} $active={name === 'Laundry'}>{name}</NavItem>
          ))}
        </NavList>
      </Navbar>
      <Page>
        <PageHeader><Title>Laundry</Title></PageHeader>
        <Tabs>
          <Tab $active>Input Data Laundry</Tab>
          <Tab>Data Laundry</Tab>
        </Tabs>
        <Columns>
          <Form>
            <Group>
              <Label>Nama Laundry</Label>
              <Input placeholder="Nama Laundry" />
            </Group>
            <Group>
              <Label>Alamat</Label>
              <Textarea placeholder="Alamat" />
            </Group>
            <Group $gap={0}>
              <Label>Koordinat</Label>
              <Pair>
                <Input placeholder="Latitude" />
                <Input placeholder="Longitude" />
              </Pair>
              <LinkButton>Cek Koordinat</LinkButton>
            </Group>
            <Group $gap={35}>
              <Label>Tipe</Label>
              <Select>
                Pilih Tipe
                <SelectArrow>
                  <svg width="7" height="4" viewBox="0 0 7 4"><path d="M0 0h7L3.5 4z" fill="#000" /></svg>
                </SelectArrow>
              </Select>
            </Group>
            <Buttons>
              <Button type="button">Simpan</Button>
              <Button type="button" $danger>Reset</Button>
            </Buttons>
          </Form>
          <MapFrame>
            <CityMap />
            <MapTypes>
              <MapType $active>Map</MapType>
              <MapType>Satellite</MapType>
            </MapTypes>
            <PegmanButton>
              <svg width="28" height="28" viewBox="0 0 28 28">
                <path d="M11 10.2h6l2.4 6.4-1.3 1.1-1.3-2.2-.7 7.2h-1.6l-.5-4.6-.5 4.6h-1.6l-.7-7.2-1.3 2.2-1.3-1.1z" fill="#eda93c" stroke="#b98348" strokeWidth=".8" />
                <circle cx="14" cy="6.8" r="3.4" fill="#f2b44d" stroke="#c99147" strokeWidth=".7" />
                <path d="M11.5 10.5h5" stroke="#b67a2c" strokeWidth="1" />
              </svg>
            </PegmanButton>
            <ZoomButtons>
              <svg width="28" height="55" viewBox="0 0 28 55">
                <path d="M9 13.5h11M14.5 8v11M9 41.5h11" stroke="#666" strokeWidth="3" />
                <path d="M4 27.5h19" stroke="#e6e6e6" />
              </svg>
            </ZoomButtons>
            <Attribution>
              <Credit $width={119}>Map data ©2017 Google</Credit>
              <Credit $width={71}>Terms of Use</Credit>
              <Credit $width={95}>Report a map error</Credit>
            </Attribution>
          </MapFrame>
        </Columns>
      </Page>
    </>
  );
}
